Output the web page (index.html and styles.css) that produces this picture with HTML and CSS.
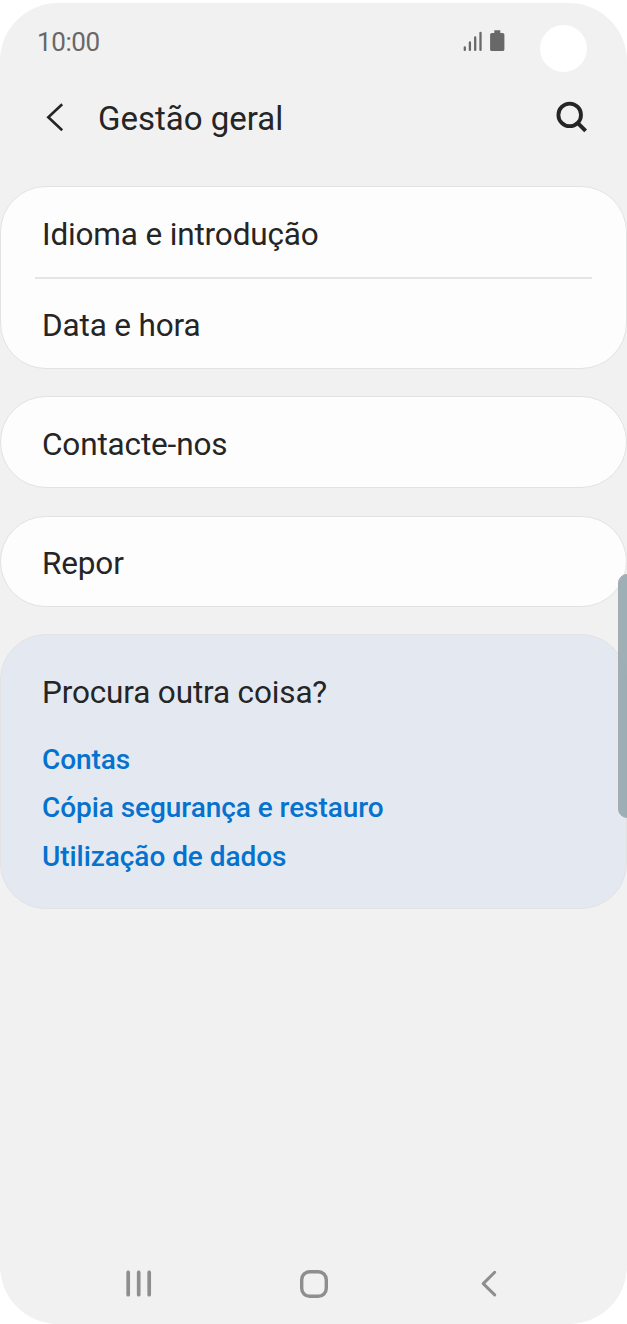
FILE: index.html
```html
<!DOCTYPE html>
<html lang="pt">
<head>
<meta charset="utf-8">
<title>Gestão geral</title>
<link rel="stylesheet" href="styles.css">
</head>
<body>
<div class="phone">
  <div class="status">
    <span class="clock">10:00</span>
    <svg class="status-icons" width="42" height="22" viewBox="0 0 42 22">
      <g stroke="#686868" stroke-width="2.3" stroke-linecap="round">
        <path d="M1.8 17.5v2.4M6.9 12.5v7.4M12.2 7.4v12.5M17.5 2.8v17.1"/>
      </g>
      <path fill="#686868" d="M31.3.2h6v2.7h2.2q1.9 0 1.9 1.5v15q0 1.7-1.7 1.7H28.8q-1.7 0-1.7-1.7v-15q0-1.5 1.9-1.5h2.3z"/>
    </svg>
    <span class="camera"></span>
  </div>
  <header class="header">
    <svg class="back" width="18" height="30" viewBox="0 0 18 30"><path d="M16.2 2.2 2.3 15.2 16.2 28.2" fill="none" stroke="#252525" stroke-width="2.6"/></svg>
    <h1 class="title">Gestão geral</h1>
    <svg class="search" width="32" height="32" viewBox="0 0 32 32"><g fill="none" stroke="#252525"><circle cx="13.7" cy="13.9" r="11.3" stroke-width="3.8"/><path d="m21.6 21.8 8 8" stroke-width="4"/></g></svg>
  </header>
  <main class="cards">
    <section class="card">
      <div class="row row-lower">Idioma e introdução</div>
      <div class="divider"></div>
      <div class="row">Data e hora</div>
    </section>
    <section class="card card-contact"><div class="row row-lower">Contacte-nos</div></section>
    <section class="card card-reset"><div class="row">Repor</div></section>
    <section class="card suggestions">
      <h2 class="question">Procura outra coisa?</h2>
      <a class="link">Contas</a>
      <a class="link">Cópia segurança e restauro</a>
      <a class="link">Utilização de dados</a>
    </section>
  </main>
  <nav class="nav">
    <svg width="26" height="28" viewBox="0 0 26 28"><path d="M2.2 2.4v22.3M12.7 2.4v22.3M23.2 2.4v22.3" stroke="#8e8e8e" stroke-width="3.7" stroke-linecap="round"/></svg>
    <svg width="30" height="30" viewBox="0 0 30 30"><rect x="2.7" y="2.7" width="24.6" height="24.6" rx="8" fill="none" stroke="#8e8e8e" stroke-width="3.4"/></svg>
    <svg width="16" height="28" viewBox="0 0 16 28"><path d="M13.7 2.3 2.2 13.6 13.7 24.9" fill="none" stroke="#8e8e8e" stroke-width="3" stroke-linecap="round" stroke-linejoin="round"/></svg>
  </nav>
  <div class="edge-handle"></div>
</div>
</body>
</html>
```
FILE: styles.css
```css
* { box-sizing: border-box; }
body { margin: 0; background: #fff; font-family: Roboto, "Liberation Sans", sans-serif; color: #252525; }
h1, h2 { margin: 0; font-weight: 400; }
svg { display: block; flex: none; }
.phone { position: relative; display: flex; flex-direction: column; width: 627px; height: 1321px; margin-top: 3px; background: #f1f1f1; border-radius: 58px; overflow: hidden; }
.status { display: flex; height: 78px; padding: 0 40px 0 37px; }
.clock { margin-top: 23px; font-size: 26px; line-height: 32px; letter-spacing: -0.4px; color: #686868; }
.status-icons { margin: 27px 35px 0 auto; }
.camera { width: 47px; height: 47px; margin-top: 22px; border-radius: 50%; background: #fff; }
.header { display: flex; height: 105px; padding: 0 39px 0 46px; }
.back { margin-top: 21px; }
.title { margin: 18px 0 0 34px; font-size: 33px; line-height: 40px; }
.search { margin: 20px 0 0 auto; }
.cards { display: flex; flex-direction: column; }
.card { height: 183px; margin-bottom: 27px; background: #fdfdfd; border: 1px solid #e2e2e2; border-radius: 46px; font-size: 31.5px; letter-spacing: -0.15px; }
.card-contact { height: 92px; margin-bottom: 28px; }
.card-reset { height: 91px; }
.row { height: 90px; padding: 3px 41px 0; line-height: 88px; }
.row-lower { padding-top: 4px; }
.divider { height: 2px; margin: 0 34px; background: #e5e5e5; }
.suggestions { display: flex; flex-direction: column; height: 275px; margin: 0; padding: 38px 41px 0; background: #e4e9f1; }
.question { margin-bottom: 23px; font-size: 31.5px; line-height: 40px; }
.link { font-size: 28px; line-height: 48.3px; letter-spacing: -0.06px; font-weight: 500; color: #0572ce; }
.nav { display: grid; grid-template-columns: 173px 182px 16px; align-items: center; margin: auto 0 25px 126px; height: 30px; }
.edge-handle { position: absolute; top: 571px; right: -10px; width: 19px; height: 244px; border: 1px solid #a6abad; border-radius: 9px; background: rgba(142,162,170,.84); }
```
